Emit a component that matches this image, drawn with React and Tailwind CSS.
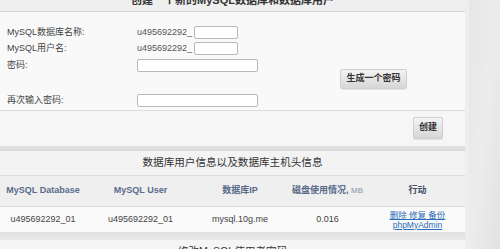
import React from 'react';

const font = { fontFamily: '"Liberation Sans", "Noto Sans CJK SC", Arial, sans-serif' };

function Field({ label, prefix, wide }) {
  return (
    <div className="flex items-center h-[16.5px]">
      <span className="w-[137px] pl-[7px] text-[9px] text-[#444]">{label}</span>
      {prefix && <span className="text-[9px] text-[#555] mr-[2px]">{prefix}</span>}
      <span
        className={`${wide ? 'w-[121px]' : 'w-[44px]'} h-[13px] bg-white border border-[#b8b8b8] rounded-[2px]`}
      />
    </div>
  );
}

function GrayButton({ children, className = '' }) {
  return (
    <button
      className={`bg-gradient-to-b from-[#f4f4f4] to-[#d6d6d6] border border-[#d0d0d0] rounded-[2px] text-[9px] font-bold text-[#333] shadow-[0_1px_1px_rgba(0,0,0,0.08)] ${className}`}
    >
      {children}
    </button>
  );
}

export default function App() {
  return (
    <div className="flex w-[500px] h-[249px] overflow-hidden bg-[#e4e4e4]" style={font}>
      <div className="w-[465px] flex flex-col shrink-0">
        {/* header of create panel, cut off at top */}
        <div className="h-[12px] bg-[#efefef] border-b border-[#d6d6d6] flex justify-center overflow-hidden">
          <span className="text-[11px] font-bold text-[#333] leading-none -mt-[5px]">
            创建一个新的MySQL数据库和数据库用户
          </span>
        </div>

        {/* form */}
        <div className="h-[99px] bg-[#f9f9f9] border-b border-[#dcdcdc] flex pt-[12px]">
          <div className="w-[340px] flex flex-col">
            <Field label="MySQL数据库名称:" prefix="u495692292_" />
            <Field label="MySQL用户名:" prefix="u495692292_" />
            <Field label="密码:" wide />
            <div className="h-[19px]" />
            <Field label="再次输入密码:" wide />
          </div>
          <div className="pt-[40px]">
            <GrayButton className="w-[67px] h-[20px]">生成一个密码</GrayButton>
          </div>
        </div>

        {/* create button */}
        <div className="h-[35px] bg-[#f6f6f6] flex justify-end items-start pt-[6px] pr-[22px]">
          <GrayButton className="w-[30px] h-[22px]">创建</GrayButton>
        </div>

        {/* separator band */}
        <div className="h-[5px] bg-gradient-to-b from-[#e2e2e2] to-[#dadada]" />

        {/* db info section */}
        <div className="h-[25px] bg-[#f3f3f3] border-b border-[#dcdcdc] flex items-center justify-center">
          <span className="text-[10.6px] text-[#333]">数据库用户信息以及数据库主机头信息</span>
        </div>
        <div className="h-[31px] bg-[#efefef] border-b border-[#dddddd] grid grid-cols-[86px_109px_90px_85px_95px] items-center text-[9px] font-bold text-[#5a6a8a] text-center">
          <span>MySQL Database</span>
          <span>MySQL User</span>
          <span>数据库IP</span>
          <span>
            磁盘使用情况, <span className="font-normal text-[#8a93a8] text-[8px]">MB</span>
          </span>
          <span className="text-[#44506a]">行动</span>
        </div>
        <div className="h-[25px] bg-[#fafafa] grid grid-cols-[86px_109px_90px_85px_95px] items-center text-[9px] text-[#444] text-center">
          <span>u495692292_01</span>
          <span>u495692292_01</span>
          <span>mysql.10g.me</span>
          <span>0.016</span>
          <span className="flex flex-col leading-[10px] text-[#2a6db5] underline text-[8.5px]">
            <span>删除 修复 备份</span>
            <span>phpMyAdmin</span>
          </span>
        </div>

        {/* separator band */}
        <div className="h-[8px] bg-gradient-to-b from-[#e0e0e0] to-[#e8e8e8]" />

        {/* next panel, cut off */}
        <div className="flex-1 bg-[#f5f5f5] flex justify-center pt-[6px] overflow-hidden">
          <span className="text-[10.6px] text-[#333] leading-none">修改MySQL使用者密码</span>
        </div>
      </div>
      <div className="w-[4px] bg-[#eeeeee]" />
      <div className="flex-1 bg-gradient-to-br from-[#e6e6e6] via-[#ececec] to-[#e2e2e2]" />
    </div>
  );
}
